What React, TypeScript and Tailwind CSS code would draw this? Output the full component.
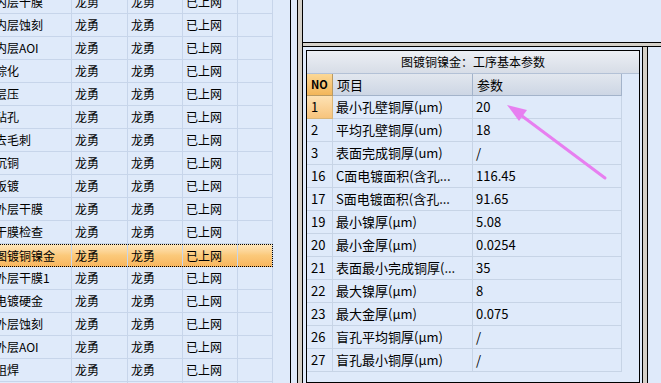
const LEFT_ROWS = [
  '内层干膜',
  '内层蚀刻',
  '内层AOI',
  '棕化',
  '层压',
  '钻孔',
  '去毛刺',
  '沉铜',
  '板镀',
  '外层干膜',
  '干膜检查',
  '图镀铜镍金',
  '外层干膜1',
  '电镀硬金',
  '外层蚀刻',
  '外层AOI',
  '阻焊',
  '字符',
];
const SELECTED = '图镀铜镍金';

const PARAMS: [string, string, string][] = [
  ['1', '最小孔壁铜厚(μm)', '20'],
  ['2', '平均孔壁铜厚(um)', '18'],
  ['3', '表面完成铜厚(um)', '/'],
  ['16', 'C面电镀面积(含孔...', '116.45'],
  ['17', 'S面电镀面积(含孔...', '91.65'],
  ['19', '最小镍厚(μm)', '5.08'],
  ['20', '最小金厚(μm)', '0.0254'],
  ['21', '表面最小完成铜厚(...', '35'],
  ['22', '最大镍厚(μm)', '8'],
  ['23', '最大金厚(μm)', '0.075'],
  ['26', '盲孔平均铜厚(μm)', '/'],
  ['27', '盲孔最小铜厚(μm)', '/'],
];

function ProcessList() {
  return (
    <div className="h-full w-[291px] shrink-0 overflow-hidden border-r border-black bg-[#dfeafa] text-[12px] leading-none">
      {/* grid is scrolled a little to the right and down */}
      <div className="-ml-[9px] -mt-[9px] w-[282px]">
        {LEFT_ROWS.map((name) => {
          const sel = name === SELECTED;
          return (
            <div
              key={name}
              className={
                sel
                  ? 'flex h-[23px] bg-gradient-to-b from-[#fee8c0] via-[#fbc97a] to-[#f8b55c] outline-1 outline-dotted outline-black -outline-offset-1'
                  : 'flex h-[23px] border-b border-[#c7d5ea]'
              }
            >
              <div className="flex w-[81px] items-center whitespace-nowrap border-r border-[#c7d5ea] pl-[4px]">{name}</div>
              <div className="flex w-[56px] items-center border-r border-[#c7d5ea] pl-[3px]">龙勇</div>
              <div className="flex w-[55px] items-center border-r border-[#c7d5ea] pl-[3px]">龙勇</div>
              <div className="flex w-[55px] items-center border-r border-[#c7d5ea] pl-[3px]">已上网</div>
              <div className="w-[35px] border-r border-[#c7d5ea]" />
            </div>
          );
        })}
      </div>
    </div>
  );
}

function ParamPanel() {
  return (
    <div className="h-full border border-black bg-[#dfeafa]">
      <div className="flex h-[23px] items-center justify-center border-b border-[#b3c1d6] bg-gradient-to-b from-[#eceff4] to-[#d7dde7] text-[12px]">
        图镀铜镍金：工序基本参数
      </div>
      <div className="flex h-[22px] text-[13px]">
        <div className="flex w-[26px] items-center border-b border-r border-[#b99a63] bg-gradient-to-b from-[#fcd896] to-[#f2b659] pl-[4px] text-[11px] font-bold">
          NO
        </div>
        <div className="flex w-[140px] items-center border-b border-r border-[#a3b3ca] bg-gradient-to-b from-[#e2e7ef] to-[#cdd6e4] pl-[4px]">
          项目
        </div>
        <div className="flex w-[149px] items-center border-b border-r border-[#a3b3ca] bg-gradient-to-b from-[#e2e7ef] to-[#cdd6e4] pl-[4px]">
          参数
        </div>
      </div>
      {PARAMS.map(([no, item, val], i) => (
        <div key={no} className="flex h-[23px] text-[13px]">
          <div
            className={
              i === 0
                ? 'flex w-[26px] items-center border-b border-r border-[#d9b67a] bg-gradient-to-b from-[#fde2b4] to-[#f7c47c] pl-[4px]'
                : 'flex w-[26px] items-center border-b border-r border-[#c7d4e6] pl-[4px]'
            }
          >
            {no}
          </div>
          <div className="flex w-[140px] items-center overflow-hidden whitespace-nowrap border-b border-r border-[#c7d4e6] pl-[3px]">
            {item}
          </div>
          <div className="flex w-[149px] items-center border-b border-r border-[#c7d4e6] pl-[3px]">{val}</div>
        </div>
      ))}
    </div>
  );
}

export default function App() {
  return (
    <div
      className="relative flex h-[383px] w-[661px] overflow-hidden bg-[#dfeafa] text-black"
      style={{ fontFamily: '"Noto Sans CJK SC", "Noto Sans", sans-serif' }}
    >
      <ProcessList />
      <div className="w-[6px] shrink-0" />
      <div className="w-[6px] shrink-0 border-x border-black bg-[#d4d0c8]" />

      <div className="flex min-w-0 flex-1 flex-col">
        <div className="h-[42px] shrink-0" />
        <div className="h-[5px] shrink-0 border-y border-black bg-[#d4d0c8]" />
        <div className="flex min-h-0 flex-1">
          <div className="w-[339px] shrink-0 pl-[3px] pr-[2px] pt-[3px]">
            <ParamPanel />
          </div>
          <div className="w-[6px] shrink-0 border-x border-black bg-[#d4d0c8]" />
          <div className="flex-1" />
        </div>
      </div>

      {/* annotation arrow drawn over the screenshot */}
      <svg className="pointer-events-none absolute inset-0" width="661" height="383">
        <line x1="605" y1="178" x2="518" y2="113" stroke="#e77ff0" strokeWidth="3" strokeLinecap="round" />
        <polygon points="507,105 519,121 527,110" fill="#e77ff0" />
      </svg>
    </div>
  );
}
